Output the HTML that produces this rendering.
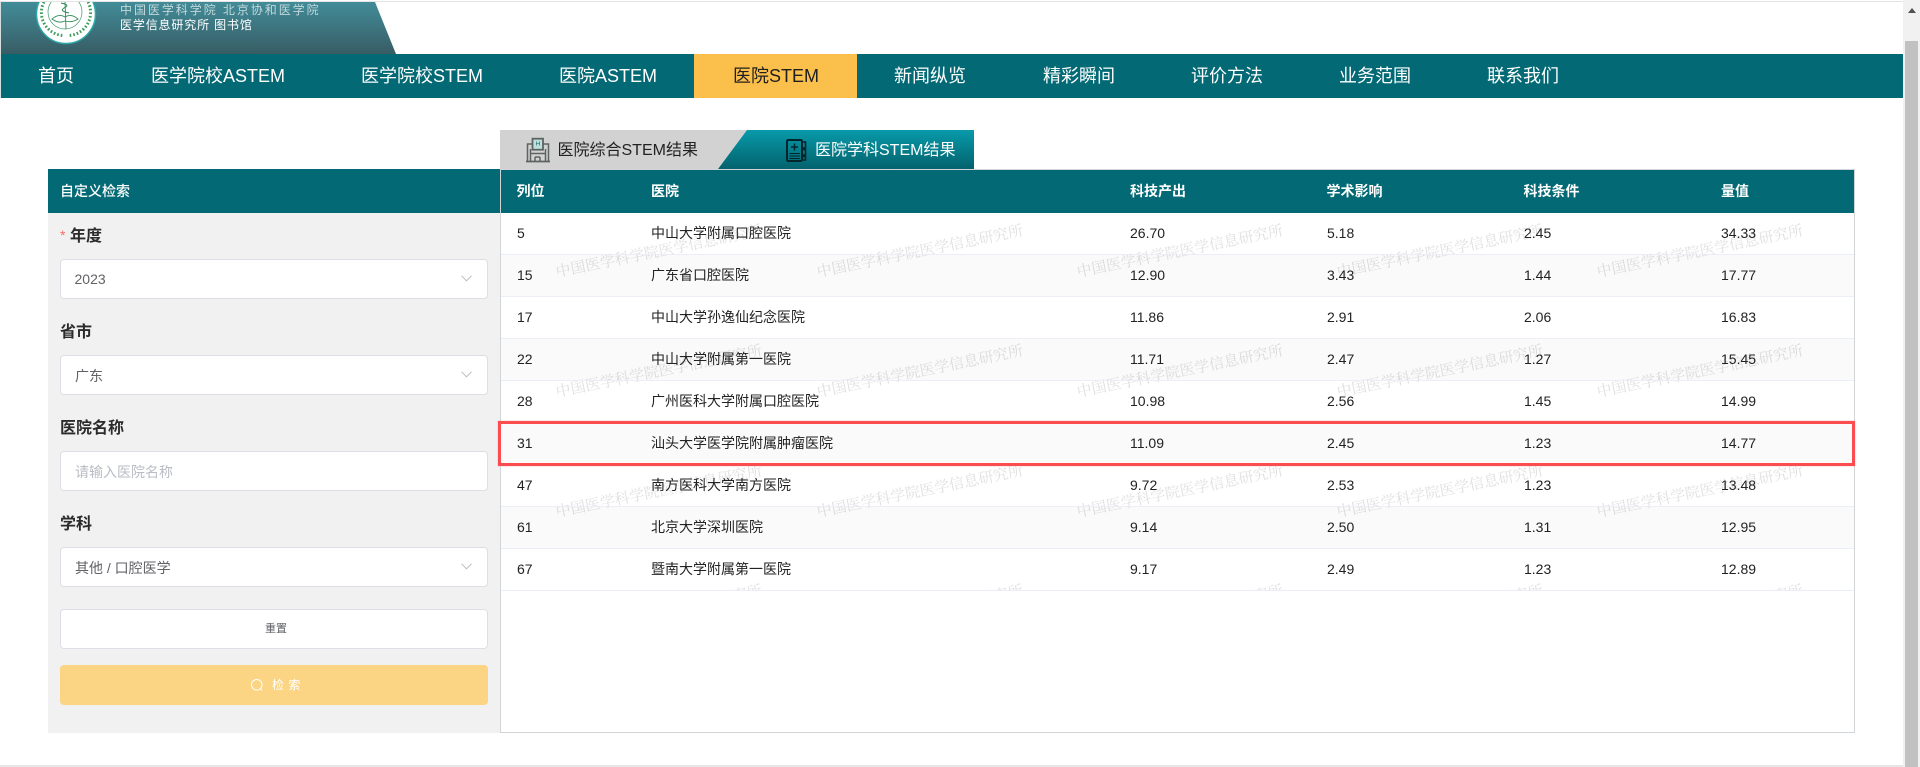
<!DOCTYPE html>
<html lang="zh-CN">
<head>
<meta charset="utf-8">
<title>医院学科STEM结果</title>
<style>
html,body{margin:0;padding:0;width:1920px;height:767px;overflow:hidden;background:#fff;}
body{position:relative;font-family:"Liberation Sans","Noto Sans CJK SC",sans-serif;color:#222;}
.a{position:absolute;white-space:nowrap;}
#topline{left:0;top:1px;width:1903px;height:1px;background:#e4e4e4;}
#bottomline{left:0;top:765px;width:1903px;height:2px;background:#e6e6e6;}
#leftline{left:0;top:2px;width:1px;height:96px;background:#d5dfe0;}
#nav{left:0;top:54px;width:1903px;height:44px;background:#036a75;}
.n{top:54px;height:44px;line-height:45px;font-size:18px;color:#fff;}
#active{left:694px;top:54px;width:163px;height:44px;background:#fbbf4c;}
.t1{left:120px;top:2px;font-size:12px;line-height:16px;letter-spacing:1.95px;color:#c4d8db;}
.t2{left:120px;top:17px;font-size:12px;line-height:16px;letter-spacing:.85px;color:#fff;}
.tabt{top:139px;font-size:16px;line-height:24px;}
#panel{left:48px;top:169px;width:452px;height:564px;background:#f1f1f1;}
#phead{left:48px;top:169px;width:452px;height:44px;background:#036a75;}
.ph{left:60px;top:181px;font-size:14px;line-height:20px;color:#fff;font-weight:500;}
.lab{left:60px;font-size:16px;line-height:24px;font-weight:700;color:#2b2b2b;}
.box{left:60px;width:426px;height:38px;background:#fff;border:1px solid #dcdfe6;border-radius:4px;}
.v{left:75px;font-size:14px;line-height:20px;color:#606266;}
.chev{left:461px;width:11px;height:7px;}
#btn{left:60px;top:665px;width:428px;height:40px;border-radius:4px;background:#fbd583;}
#tblbox{left:500px;top:169px;width:1353px;height:562px;border:1px solid #d2d5d8;background:#fff;}
#thead{left:501px;top:170px;width:1353px;height:43px;background:#036a75;}
.th{top:181px;font-size:14px;line-height:20px;font-weight:700;color:#fff;}
#wm{left:501px;top:213px;width:1353px;height:377px;overflow:hidden;}
table{position:absolute;left:501px;top:213px;width:1353px;border-collapse:separate;border-spacing:0;table-layout:fixed;font-size:14px;color:#222;}
td{height:41px;padding:0;border-bottom:1px solid #ebeef5;line-height:41px;white-space:nowrap;}
td:first-child{padding-left:16px;}
tr:nth-child(even) td{background:rgba(0,0,0,.02);}
#red{left:498px;top:421px;width:1351px;height:39px;border:3px solid #fb4d50;box-shadow:0 0 1px rgba(251,77,80,.6);}
#track{left:1903px;top:0;width:17px;height:767px;background:#f1f1f1;}
#thumb{left:1905px;top:41px;width:13px;height:726px;background:#c1c1c1;}
</style>
</head>
<body>
<div class="a" id="topline"></div>

<svg class="a" style="left:0;top:2px" width="400" height="52" viewBox="0 0 400 52">
  <defs>
    <linearGradient id="hg" x1="0" y1="0" x2="0" y2="1">
      <stop offset="0" stop-color="#418c98"/>
      <stop offset="1" stop-color="#385d65"/>
    </linearGradient>
  </defs>
  <polygon points="0,0 375,0 396,52 0,52" fill="url(#hg)"/>
  <circle cx="66" cy="12" r="29.5" fill="#fff" stroke="#2fa7a7" stroke-width="1.5"/>
  <circle cx="65" cy="10" r="17" fill="none" stroke="#3f9a70" stroke-width="0.7"/>
  <path d="M44 0 A23 23 0 0 0 63 33.5 M88 0 A23 23 0 0 1 69 33.5" fill="none" stroke="#3c9c5c" stroke-width="3" stroke-dasharray="1.6 2"/>
  <path d="M52 17 Q59 11 65 15 Q71 11 78 17 Q72 21 65 19 Q59 22 52 17 Z" fill="none" stroke="#2f8a58" stroke-width="0.9"/>
  <path d="M65 0 L66 27" stroke="#2f8a58" stroke-width="0.9"/>
  <path d="M61 1 Q71 3 64 6 Q59 9 69 11" fill="none" stroke="#2f8a58" stroke-width="1"/>
</svg>
<div class="a t1">中国医学科学院 北京协和医学院</div>
<div class="a t2">医学信息研究所 图书馆</div>

<div class="a" id="nav"></div>
<div class="a" id="leftline"></div>
<div class="a" id="active"></div>
<div class="a n" style="left:38px">首页</div>
<div class="a n" style="left:151px">医学院校ASTEM</div>
<div class="a n" style="left:361px">医学院校STEM</div>
<div class="a n" style="left:559px">医院ASTEM</div>
<div class="a n" style="left:733px;color:#1f1f1f">医院STEM</div>
<div class="a n" style="left:894px">新闻纵览</div>
<div class="a n" style="left:1043px">精彩瞬间</div>
<div class="a n" style="left:1191px">评价方法</div>
<div class="a n" style="left:1339px">业务范围</div>
<div class="a n" style="left:1487px">联系我们</div>

<!-- tabs -->
<svg class="a" style="left:500px;top:130px" width="480" height="40" viewBox="0 0 480 40">
  <defs>
    <linearGradient id="tg" x1="0" y1="0" x2="0" y2="1">
      <stop offset="0" stop-color="#089aaa"/>
      <stop offset="1" stop-color="#03626d"/>
    </linearGradient>
  </defs>
  <polygon points="0,0 247,0 218,39 0,39" fill="#d2d2d2"/>
  <polygon points="247,0 474,0 474,39 218,39" fill="url(#tg)"/>
  <!-- hospital icon -->
  <rect x="33" y="9" width="10" height="10" fill="#bde0dc"/>
  <g fill="none" stroke="#5d6462" stroke-width="1.5">
    <rect x="32.5" y="8.7" width="10.5" height="11" stroke-width="1.8"/>
    <path d="M32 14H27.5V31M43.5 14H48.5V31"/>
    <path d="M30.5 19V31M45.5 19V31"/>
    <path d="M26 31.5H50" stroke-width="1.8"/>
    <path d="M30.5 23.5H45.5M35 27H40M35 27V31M40 27V31"/>
  </g>
  <path d="M36.5 11.5V15.5M39.5 11.5V15.5M36.5 13.5H39.5" stroke="#3d7f7a" stroke-width=".8" fill="none"/>
  <!-- book icon -->
  <g fill="none" stroke="#04252b" stroke-width="2">
    <rect x="287" y="10" width="15" height="21" rx="1.2"/>
    <path d="M303 12H305.5V18H303M303 19.5H305.5V25H303M303 26.5H305.5V30H303" stroke-width="1.6"/>
    <path d="M294.5 13.5V20.5M291 17H298" stroke-width="1.5"/>
    <path d="M289.5 23.5H300M289.5 26H300M289.5 28.5H300" stroke-width="1.1"/>
  </g>
</svg>
<div class="a tabt" style="left:557.5px;color:#222">医院综合STEM结果</div>
<div class="a tabt" style="left:815px;color:#fff">医院学科STEM结果</div>

<!-- left panel -->
<div class="a" id="panel"></div>
<div class="a" id="phead"></div>
<div class="a ph">自定义检索</div>

<div class="a" style="left:60px;top:228px;font-size:14px;line-height:14px;color:#f56c6c">*</div>
<div class="a lab" style="left:70px;top:225px">年度</div>
<div class="a box" style="top:259px"></div>
<div class="a v" style="top:269px;left:74.5px">2023</div>
<svg class="a chev" style="top:275px" viewBox="0 0 11 7"><path d="M.5 .8 5.5 5.8 10.5 .8" fill="none" stroke="#b9bcc4" stroke-width="1"/></svg>

<div class="a lab" style="top:321px">省市</div>
<div class="a box" style="top:355px"></div>
<div class="a v" style="top:366px">广东</div>
<svg class="a chev" style="top:371px" viewBox="0 0 11 7"><path d="M.5 .8 5.5 5.8 10.5 .8" fill="none" stroke="#b9bcc4" stroke-width="1"/></svg>

<div class="a lab" style="top:417px">医院名称</div>
<div class="a box" style="top:451px"></div>
<div class="a v" style="top:462px;color:#b9bcc4">请输入医院名称</div>

<div class="a lab" style="top:513px">学科</div>
<div class="a box" style="top:547px"></div>
<div class="a v" style="top:558px">其他 / 口腔医学</div>
<svg class="a chev" style="top:563px" viewBox="0 0 11 7"><path d="M.5 .8 5.5 5.8 10.5 .8" fill="none" stroke="#b9bcc4" stroke-width="1"/></svg>

<div class="a box" style="top:609px"></div>
<div class="a" style="left:265px;top:621px;font-size:11px;line-height:16px;color:#606266">重置</div>
<div class="a" id="btn"></div>
<svg class="a" style="left:250px;top:678px" width="14" height="14" viewBox="0 0 14 14"><circle cx="6.8" cy="6.8" r="5.3" fill="none" stroke="#fff" stroke-width="1"/><path d="M10.5 10.7 12.2 12.6" stroke="#fff" stroke-width="1"/></svg>
<div class="a" style="left:272px;top:677px;font-size:12px;line-height:16px;letter-spacing:.5px;color:#fff">检 索</div>

<!-- table -->
<div class="a" id="tblbox"></div>
<div class="a" id="wm">
<svg width="1353" height="377" viewBox="501 213 1353 377" style="display:block" font-family="'Liberation Serif','Noto Serif CJK SC',serif" font-size="15" fill="#e0e0e0">
<text x="557" y="277" transform="rotate(-11.5 557 277)">中国医学科学院医学信息研究所</text>
<text x="818" y="277" transform="rotate(-11.5 818 277)">中国医学科学院医学信息研究所</text>
<text x="1078" y="277" transform="rotate(-11.5 1078 277)">中国医学科学院医学信息研究所</text>
<text x="1338" y="277" transform="rotate(-11.5 1338 277)">中国医学科学院医学信息研究所</text>
<text x="1598" y="277" transform="rotate(-11.5 1598 277)">中国医学科学院医学信息研究所</text>
<text x="557" y="397" transform="rotate(-11.5 557 397)">中国医学科学院医学信息研究所</text>
<text x="818" y="397" transform="rotate(-11.5 818 397)">中国医学科学院医学信息研究所</text>
<text x="1078" y="397" transform="rotate(-11.5 1078 397)">中国医学科学院医学信息研究所</text>
<text x="1338" y="397" transform="rotate(-11.5 1338 397)">中国医学科学院医学信息研究所</text>
<text x="1598" y="397" transform="rotate(-11.5 1598 397)">中国医学科学院医学信息研究所</text>
<text x="557" y="517" transform="rotate(-11.5 557 517)">中国医学科学院医学信息研究所</text>
<text x="818" y="517" transform="rotate(-11.5 818 517)">中国医学科学院医学信息研究所</text>
<text x="1078" y="517" transform="rotate(-11.5 1078 517)">中国医学科学院医学信息研究所</text>
<text x="1338" y="517" transform="rotate(-11.5 1338 517)">中国医学科学院医学信息研究所</text>
<text x="1598" y="517" transform="rotate(-11.5 1598 517)">中国医学科学院医学信息研究所</text>
<text x="557" y="637" transform="rotate(-11.5 557 637)">中国医学科学院医学信息研究所</text>
<text x="818" y="637" transform="rotate(-11.5 818 637)">中国医学科学院医学信息研究所</text>
<text x="1078" y="637" transform="rotate(-11.5 1078 637)">中国医学科学院医学信息研究所</text>
<text x="1338" y="637" transform="rotate(-11.5 1338 637)">中国医学科学院医学信息研究所</text>
<text x="1598" y="637" transform="rotate(-11.5 1598 637)">中国医学科学院医学信息研究所</text>
</svg>
</div>
<div class="a" id="thead"></div>
<div class="a th" style="left:516.5px">列位</div>
<div class="a th" style="left:651px">医院</div>
<div class="a th" style="left:1130px">科技产出</div>
<div class="a th" style="left:1326.5px">学术影响</div>
<div class="a th" style="left:1523.5px">科技条件</div>
<div class="a th" style="left:1721px">量值</div>

<table>
<colgroup><col style="width:150px"><col style="width:479px"><col style="width:197px"><col style="width:197px"><col style="width:197px"><col style="width:133px"></colgroup>
<tbody>
<tr><td>5</td><td>中山大学附属口腔医院</td><td>26.70</td><td>5.18</td><td>2.45</td><td>34.33</td></tr>
<tr><td>15</td><td>广东省口腔医院</td><td>12.90</td><td>3.43</td><td>1.44</td><td>17.77</td></tr>
<tr><td>17</td><td>中山大学孙逸仙纪念医院</td><td>11.86</td><td>2.91</td><td>2.06</td><td>16.83</td></tr>
<tr><td>22</td><td>中山大学附属第一医院</td><td>11.71</td><td>2.47</td><td>1.27</td><td>15.45</td></tr>
<tr><td>28</td><td>广州医科大学附属口腔医院</td><td>10.98</td><td>2.56</td><td>1.45</td><td>14.99</td></tr>
<tr><td>31</td><td>汕头大学医学院附属肿瘤医院</td><td>11.09</td><td>2.45</td><td>1.23</td><td>14.77</td></tr>
<tr><td>47</td><td>南方医科大学南方医院</td><td>9.72</td><td>2.53</td><td>1.23</td><td>13.48</td></tr>
<tr><td>61</td><td>北京大学深圳医院</td><td>9.14</td><td>2.50</td><td>1.31</td><td>12.95</td></tr>
<tr><td>67</td><td>暨南大学附属第一医院</td><td>9.17</td><td>2.49</td><td>1.23</td><td>12.89</td></tr>
</tbody>
</table>
<div class="a" id="red"></div>

<!-- scrollbar -->
<div class="a" id="track"></div>
<div class="a" id="thumb"></div>
<svg class="a" style="left:1907px;top:8px" width="10" height="6" viewBox="0 0 10 6"><path d="M5 0 9 5H1Z" fill="#505050"/></svg>

<div class="a" id="bottomline"></div>
</body>
</html>
